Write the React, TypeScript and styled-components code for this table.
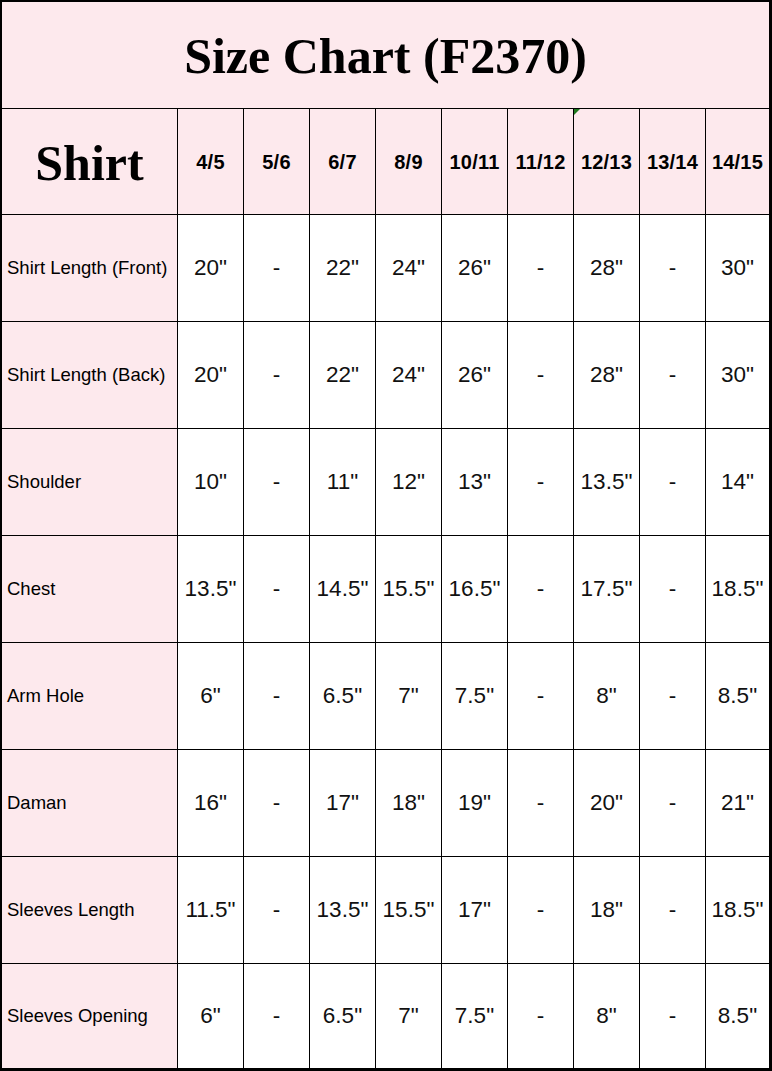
import React from "react";
import styled, { createGlobalStyle } from "styled-components";

const Global = createGlobalStyle`
  html, body { margin: 0; padding: 0; background: #ffffff; }
  body { width: 772px; height: 1071px; overflow: hidden; }
`;

const PINK = "#fde9ed";

const Sheet = styled.div`
  box-sizing: border-box;
  width: 772px;
  height: 1071px;
  border-style: solid;
  border-color: #000;
  border-width: 2px 3px 3px 2px;
  display: grid;
  grid-template-columns: 176px repeat(8, 66px) 63px;
  grid-template-rows: 107px 106px repeat(7, 107px) 104px;
  background: #fff;
`;

const Title = styled.div`
  grid-column: 1 / -1;
  box-sizing: border-box;
  border-bottom: 1px solid #000;
  background: ${PINK};
  display: flex;
  align-items: center;
  justify-content: center;
  padding-top: 2px;
  font-family: "Liberation Serif", "Times New Roman", serif;
  font-weight: bold;
  font-size: 50px;
  color: #000;
`;

const Cell = styled.div<{ $pink?: boolean; $last?: boolean; $lastRow?: boolean }>`
  position: relative;
  box-sizing: border-box;
  border-right: ${(p) => (p.$last ? "none" : "1px solid #000")};
  border-bottom: ${(p) => (p.$lastRow ? "none" : "1px solid #000")};
  background: ${(p) => (p.$pink ? PINK : "#fff")};
  display: flex;
  align-items: center;
  justify-content: center;
  color: #000;
  font-family: "Liberation Sans", Arial, sans-serif;
`;

const Corner = styled(Cell)`
  font-family: "Liberation Serif", "Times New Roman", serif;
  font-weight: bold;
  font-size: 50px;
  padding-top: 2px;
`;

const SizeHead = styled(Cell)`
  font-weight: bold;
  font-size: 20px;
  padding-top: 2px;
  letter-spacing: 0.2px;
`;

const Label = styled(Cell)`
  justify-content: flex-start;
  padding-left: 5px;
  font-size: 18.5px;
  white-space: nowrap;
`;

const Value = styled(Cell)`
  font-size: 22.5px;
  white-space: nowrap;
  color: #111;
`;

const Marker = styled.span`
  position: absolute;
  top: 0;
  left: 0;
  width: 0;
  height: 0;
  border-top: 6px solid #1f7a1f;
  border-right: 6px solid transparent;
`;

const sizes = ["4/5", "5/6", "6/7", "8/9", "10/11", "11/12", "12/13", "13/14", "14/15"];

const rows: [string, string[]][] = [
  ["Shirt Length (Front)", ['20"', "-", '22"', '24"', '26"', "-", '28"', "-", '30"']],
  ["Shirt Length (Back)", ['20"', "-", '22"', '24"', '26"', "-", '28"', "-", '30"']],
  ["Shoulder", ['10"', "-", '11"', '12"', '13"', "-", '13.5"', "-", '14"']],
  ["Chest", ['13.5"', "-", '14.5"', '15.5"', '16.5"', "-", '17.5"', "-", '18.5"']],
  ["Arm Hole", ['6"', "-", '6.5"', '7"', '7.5"', "-", '8"', "-", '8.5"']],
  ["Daman", ['16"', "-", '17"', '18"', '19"', "-", '20"', "-", '21"']],
  ["Sleeves Length", ['11.5"', "-", '13.5"', '15.5"', '17"', "-", '18"', "-", '18.5"']],
  ["Sleeves Opening", ['6"', "-", '6.5"', '7"', '7.5"', "-", '8"', "-", '8.5"']],
];

export default function App() {
  return (
    <>
      <Global />
      <Sheet>
        <Title>Size Chart (F2370)</Title>
        <Corner $pink>Shirt</Corner>
        {sizes.map((s, i) => (
          <SizeHead key={s} $pink $last={i === sizes.length - 1}>
            {s === "12/13" && <Marker />}
            {s}
          </SizeHead>
        ))}
        {rows.map(([label, vals], r) => {
          const lastRow = r === rows.length - 1;
          return (
            <React.Fragment key={label}>
              <Label $pink $lastRow={lastRow}>{label}</Label>
              {vals.map((v, i) => (
                <Value key={i} $last={i === vals.length - 1} $lastRow={lastRow}>
                  {v}
                </Value>
              ))}
            </React.Fragment>
          );
        })}
      </Sheet>
    </>
  );
}
